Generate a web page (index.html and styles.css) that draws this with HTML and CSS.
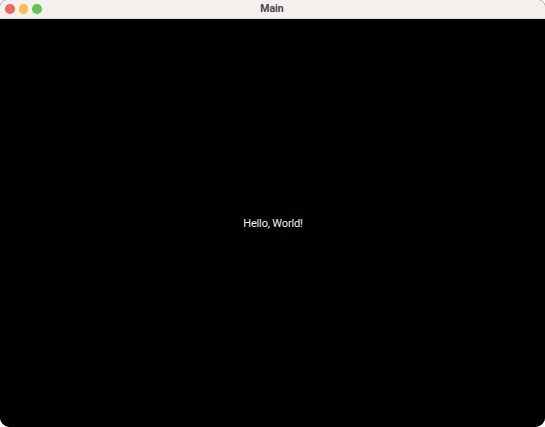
FILE: index.html
```html
<!DOCTYPE html>
<html>
<head>
<meta charset="utf-8">
<link rel="stylesheet" href="styles.css">
</head>
<body>
<div class="window">
  <div class="titlebar">
    <div class="lights">
      <span class="light red"></span>
      <span class="light yellow"></span>
      <span class="light green"></span>
    </div>
    <div class="title">Main</div>
  </div>
  <div class="content">
    <div class="hello">Hello, World!</div>
  </div>
</div>
</body>
</html>
```
FILE: styles.css
```css
html, body {
  margin: 0;
  padding: 0;
  background: #ffffff;
  width: 545px;
  height: 427px;
  overflow: hidden;
}
.window {
  width: 545px;
  height: 427px;
  display: flex;
  flex-direction: column;
  border-radius: 6px 6px 10px 10px;
  overflow: hidden;
  background: #000;
}
.titlebar {
  height: 18px;
  flex: 0 0 18px;
  background: #f5f0ed;
  border-bottom: 1px solid #e2dedb;
  display: flex;
  align-items: center;
  justify-content: center;
  position: relative;
}
.lights {
  position: absolute;
  left: 5px;
  top: 4px;
  display: flex;
  gap: 4px;
}
.light {
  width: 9.5px;
  height: 9.5px;
  border-radius: 50%;
  display: block;
}
.red { background: #ec6a5e; }
.yellow { background: #f4bf4f; }
.green { background: #61c554; }
.title {
  font-family: Roboto, "Noto Sans", sans-serif;
  font-weight: 700;
  font-size: 10.5px;
  color: #4a4644;
  line-height: 18px;
  margin-left: -1px;
}
.content {
  flex: 1;
  background: #000;
  display: flex;
  align-items: center;
  justify-content: center;
}
.hello {
  font-family: Roboto, "Noto Sans", sans-serif;
  font-size: 11px;
  letter-spacing: -0.15px;
  color: #f2f2f2;
  margin-left: 1px;
}
```
